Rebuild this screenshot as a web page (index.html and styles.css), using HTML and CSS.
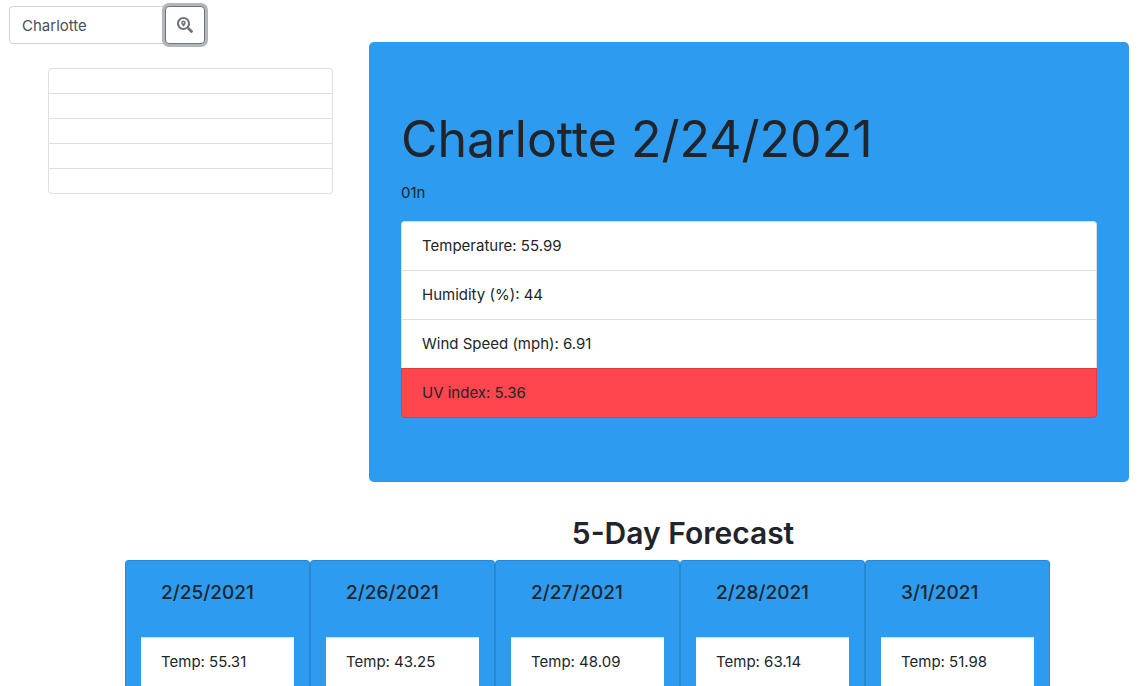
FILE: index.html
```html
<!DOCTYPE html>
<html lang="en">
<head>
<meta charset="utf-8">
<title>Weather Dashboard</title>
<link rel="stylesheet" href="styles.css">
</head>
<body>
<form class="search">
  <input class="search-input" type="text" value="Charlotte" aria-label="City">
  <button class="search-button" type="button" aria-label="Search">
    <svg class="search-icon" viewBox="0 0 512 512" aria-hidden="true"><path fill="currentColor" d="M505.04 442.66l-99.71-99.69c-4.5-4.5-10.6-7-17-7h-16.3c27.6-35.3 44-79.69 44-127.99C416.03 93.09 322.92 0 208.02 0S0 93.09 0 207.98s93.11 207.98 208.02 207.98c48.3 0 92.71-16.4 128.01-44v16.3c0 6.4 2.5 12.5 7 17l99.71 99.69c9.4 9.4 24.6 9.4 33.9 0l28.3-28.3c9.4-9.4 9.4-24.59.1-33.99zm-297.02-90.7c-79.54 0-144-64.34-144-143.98 0-79.53 64.35-143.98 144-143.98 79.54 0 144 64.34 144 143.98 0 79.53-64.35 143.98-144 143.98zm.02-239.96c-40.78 0-73.84 33.05-73.84 73.83 0 32.96 48.26 93.05 66.75 114.86a9.24 9.24 0 0 0 14.18 0c18.49-21.81 66.75-81.89 66.75-114.86 0-40.78-33.06-73.83-73.84-73.83zm0 96c-13.26 0-24-10.75-24-24 0-13.26 10.75-24 24-24s24 10.75 24 24c0 13.25-10.75 24-24 24z"/></svg>
  </button>
</form>
<main class="layout">
  <ul class="list history">
    <li></li><li></li><li></li><li></li><li></li>
  </ul>
  <section class="current">
    <h1 class="current-title">Charlotte 2/24/2021</h1>
    <p class="current-icon">01n</p>
    <ul class="list details">
      <li>Temperature: 55.99</li>
      <li>Humidity (%): 44</li>
      <li>Wind Speed (mph): 6.91</li>
      <li class="uv-high">UV index: 5.36</li>
    </ul>
  </section>
</main>
<section class="forecast">
  <h2 class="forecast-title">5-Day Forecast</h2>
  <div class="cards">
    <article class="card"><h3 class="card-date">2/25/2021</h3><ul class="card-list"><li>Temp: 55.31</li></ul></article>
    <article class="card"><h3 class="card-date">2/26/2021</h3><ul class="card-list"><li>Temp: 43.25</li></ul></article>
    <article class="card"><h3 class="card-date">2/27/2021</h3><ul class="card-list"><li>Temp: 48.09</li></ul></article>
    <article class="card"><h3 class="card-date">2/28/2021</h3><ul class="card-list"><li>Temp: 63.14</li></ul></article>
    <article class="card"><h3 class="card-date">3/1/2021</h3><ul class="card-list"><li>Temp: 51.98</li></ul></article>
  </div>
</section>
</body>
</html>
```
FILE: styles.css
```css
* { box-sizing: border-box; }
body {
  margin: 0;
  height: 100vh;
  overflow: hidden;
  background: #fff;
  color: #212529;
  font: 400 15px/24px Inter, "Liberation Sans", sans-serif;
}
h1, h2, h3, p, ul { margin: 0; padding: 0; }
ul { list-style: none; }

.search { display: flex; height: 42px; padding: 6px 9px 0; }
.search-input {
  width: 156px;
  height: 38px;
  padding: 6px 12px;
  border: 1px solid #ced4da;
  border-radius: 4px 0 0 4px;
  background: #fff;
  color: #495057;
  font: inherit;
}
.search-button {
  width: 40px;
  height: 38px;
  display: grid;
  place-items: center;
  padding: 0;
  border: 1px solid #6c757d;
  border-radius: 4px;
  background: #fff;
  color: #6c757d;
  box-shadow: 0 0 0 3px #b0b7bb;
}
.search-icon { width: 16px; height: 16px; }

.layout {
  display: grid;
  grid-template-columns: 285fr 760fr;
  column-gap: 36px;
  align-items: start;
  padding: 0 16px 0 48px;
}
.list li {
  padding: 12px 20px;
  border: 1px solid rgba(0, 0, 0, .125);
  background: #fff;
  background-clip: padding-box;
}
.list li + li { border-top: 0; }
.list li:first-child { border-radius: 4px 4px 0 0; }
.list li:last-child { border-radius: 0 0 4px 4px; }
.history { margin-top: 26px; }
.details li { background-color: #fff; background-clip: border-box; }

.current {
  padding: 64px 32px;
  border-radius: 5px;
  background: #2d9bef;
}
.current-title { margin-bottom: 8px; font-size: 50px; font-weight: 400; line-height: 67px; }
.current-icon { margin-bottom: 16px; }
.details .uv-high { background-color: #ff454d; box-shadow: 0 -1px #df3c43; }

.forecast { padding-top: 32px; }
.forecast-title {
  margin-bottom: 8px;
  padding-left: 221px;
  font-size: 30px;
  font-weight: 600;
  line-height: 38px;
  text-align: center;
}
.cards {
  display: grid;
  grid-template-columns: repeat(5, 1fr);
  padding: 0 95px 0 125px;
}
.card {
  padding: 20px 15px;
  border: 1px solid rgba(0, 0, 0, .125);
  border-radius: 4px;
  background: #2d9bef;
}
.card-date {
  margin-bottom: 32px;
  padding: 0 20px;
  font-size: 19px;
  font-weight: 500;
  line-height: 24px;
}
.card-list li {
  padding: 12px 20px;
  border-top: 1px solid #dfdfdf;
  background: #fff;
}
```
